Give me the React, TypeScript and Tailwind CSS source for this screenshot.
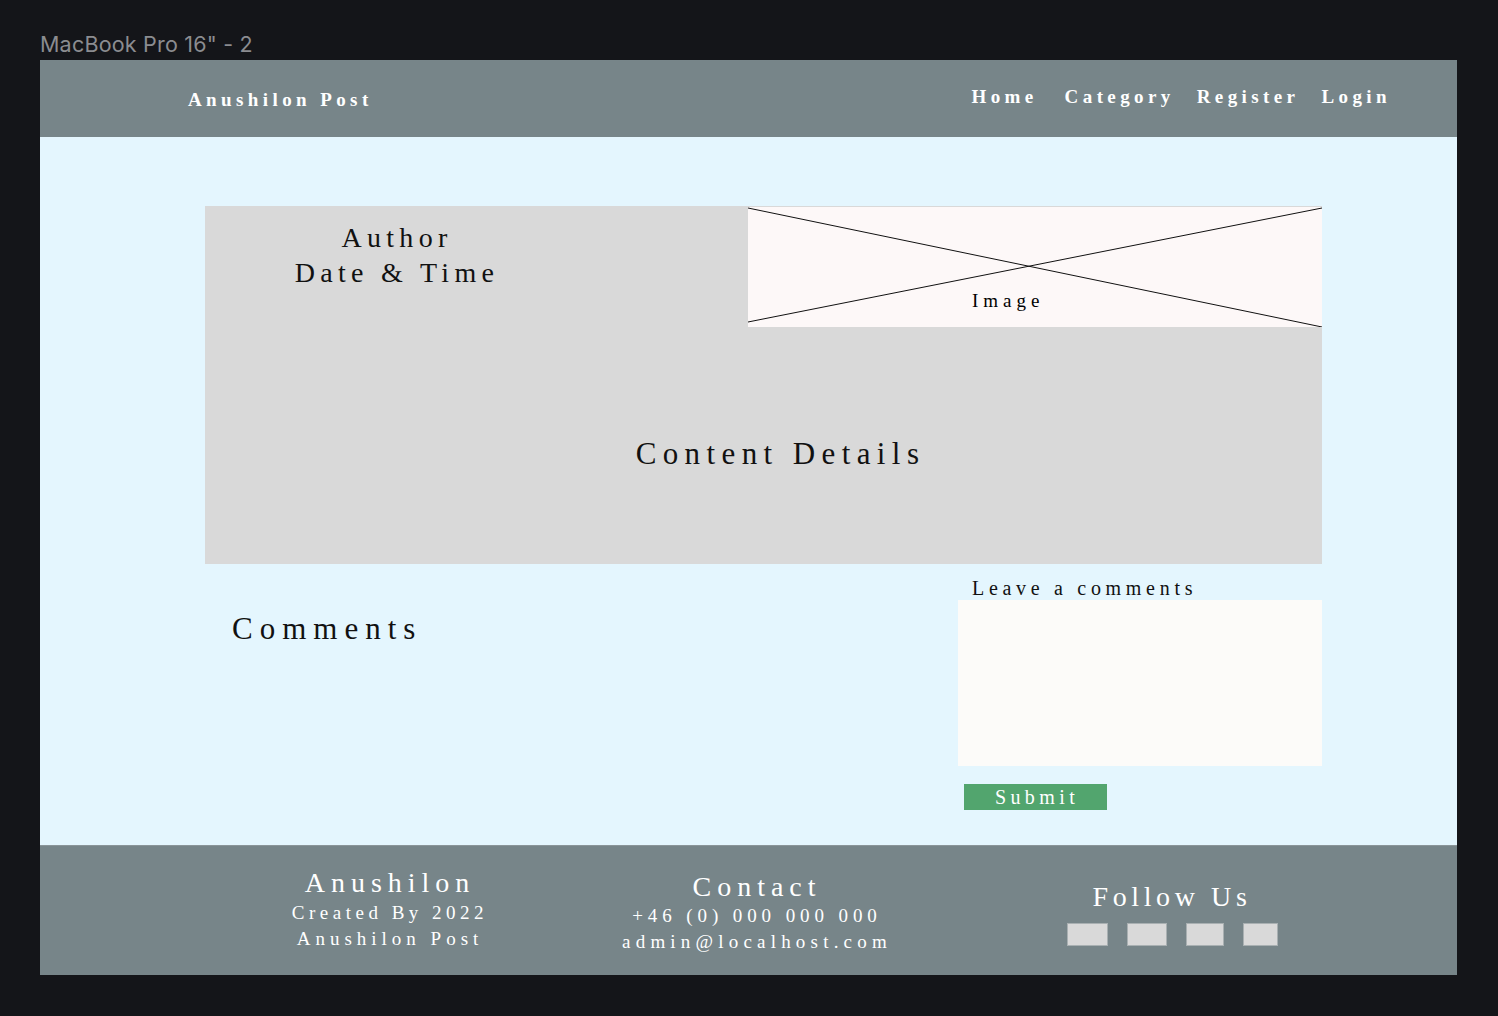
import React from 'react';

const serif = { fontFamily: '"Liberation Serif", "DejaVu Serif", serif' };

const navLinks = ['Home', 'Category', 'Register', 'Login'];

const Header: React.FC = () => (
	<header className="h-[77px] bg-[#778589] flex items-center justify-between pl-[148px] pr-[66px] text-white font-bold" style={serif}>
		<span className="text-[19px] tracking-[4.4px] mt-[3px]">Anushilon Post</span>
		<nav className="flex items-center gap-[22px] text-[19px] tracking-[4.4px] -mt-[2px]">
			{navLinks.map((link) => (
				<a key={link} href="#" className={link === 'Home' ? 'mr-[5px]' : ''}>
					{link}
				</a>
			))}
		</nav>
	</header>
);

const ImageBox: React.FC = () => (
	<div className="relative w-[574px] h-[120px] mt-[1px] bg-[#fdf8f8]">
		<svg className="absolute inset-0 w-full h-full" viewBox="0 0 574 120" preserveAspectRatio="none">
			<line x1="0" y1="1" x2="574" y2="120" stroke="#111" strokeWidth="1" />
			<line x1="0" y1="115" x2="574" y2="1" stroke="#111" strokeWidth="1" />
		</svg>
		<span className="absolute left-[224px] top-[80px] text-[19px] tracking-[5px] text-black">Image</span>
	</div>
);

const PostCard: React.FC = () => (
	<div className="w-[1117px] h-[358px] bg-[#d9d9d9] flex flex-col text-[#111]" style={serif}>
		<div className="flex h-[121px]">
			<div className="w-[543px] pt-[14px]">
				<div className="w-[384px] text-center text-[28px] leading-[35px] tracking-[5.3px]">
					<p>Author</p>
					<p>Date &amp; Time</p>
				</div>
			</div>
			<ImageBox />
		</div>
		<div className="pt-[107px] pl-[34px] text-center text-[31px] leading-[40px] tracking-[6.4px]">Content Details</div>
	</div>
);

const CommentsArea: React.FC = () => (
	<div className="flex w-[1117px]" style={serif}>
		<div className="w-[753px] pl-[27px] pt-[45px]">
			<h2 className="text-[31px] leading-[40px] tracking-[7px] text-[#111]">Comments</h2>
		</div>
		<div className="w-[364px] pt-[12px]">
			<p className="pl-[14px] h-[24px] text-[20px] leading-[24px] tracking-[4.7px] text-[#111]">Leave a comments</p>
			<textarea className="block w-[364px] h-[166px] bg-[#fcfbf9] resize-none outline-none" />
			<button className="mt-[18px] ml-[6px] w-[143px] h-[26px] bg-[#52a56e] text-white text-[20px] leading-[26px] tracking-[4.4px] pl-[3px]">
				Submit
			</button>
		</div>
	</div>
);

const Footer: React.FC = () => (
	<footer className="h-[130px] bg-[#778589] border-t border-[#8a9599] flex text-white text-center" style={serif}>
		<div className="ml-[200px] w-[300px] pt-[22px]">
			<p className="text-[28px] leading-[30px] tracking-[6px]">Anushilon</p>
			<p className="mt-[2px] text-[19px] leading-[26px] tracking-[4.5px]">Created By 2022</p>
			<p className="text-[19px] leading-[26px] tracking-[5px]">Anushilon Post</p>
		</div>
		<div className="ml-[67px] w-[300px] pt-[26px]">
			<p className="text-[28px] leading-[30px] tracking-[6px]">Contact</p>
			<p className="mt-[1px] text-[19px] leading-[26px] tracking-[4.9px]">+46 (0) 000 000 000</p>
			<p className="text-[19px] leading-[26px] tracking-[5.2px]">admin@localhost.com</p>
		</div>
		<div className="ml-[115px] w-[300px] pt-[36px] flex flex-col items-center">
			<p className="text-[28px] leading-[30px] tracking-[4.6px]">Follow Us</p>
			<div className="flex gap-[19px] mt-[11px]">
				<span className="w-[41px] h-[23px] bg-[#d9d9d9] border border-[#a9b0b2]" />
				<span className="w-[40px] h-[23px] bg-[#d9d9d9] border border-[#a9b0b2]" />
				<span className="w-[38px] h-[23px] bg-[#d9d9d9] border border-[#a9b0b2]" />
				<span className="w-[35px] h-[23px] bg-[#d9d9d9] border border-[#a9b0b2]" />
			</div>
		</div>
	</footer>
);

const App: React.FC = () => {
	return (
		<div className="min-h-screen w-full bg-[#141519] px-10 pt-[31px] pb-[41px]">
			<div className="h-[29px] text-[21.5px] leading-[26px] tracking-[0.2px] text-[#8b8c90]" style={{ fontFamily: 'Inter, "Noto Sans", sans-serif' }}>
				MacBook Pro 16&quot; - 2
			</div>
			<div className="w-[1417px]">
				<Header />
				<main className="h-[708px] bg-[#e4f6fe] pl-[165px] pt-[69px]">
					<PostCard />
					<CommentsArea />
				</main>
				<Footer />
			</div>
		</div>
	);
};

export default App;
